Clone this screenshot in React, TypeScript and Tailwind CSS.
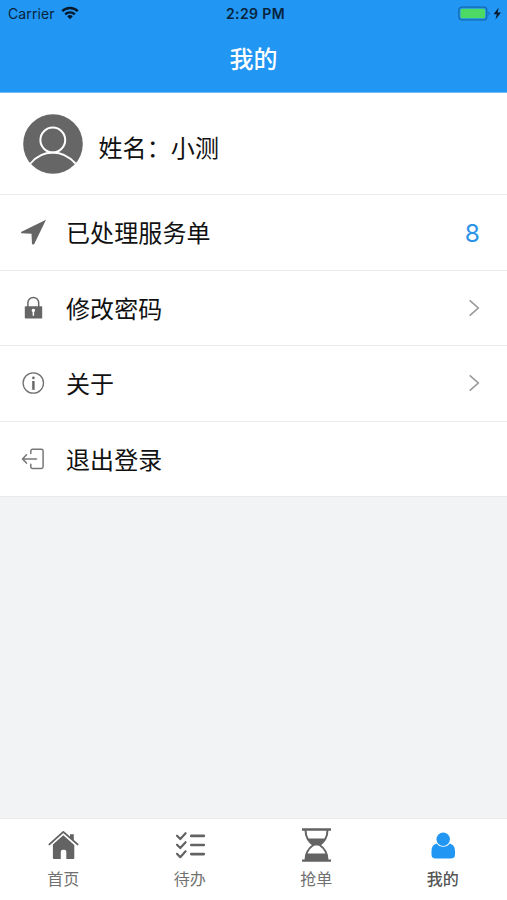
import React from "react";

const AvatarIcon = () => (
  <svg width="60" height="60" viewBox="0 0 60 60" fill="none">
    <circle cx="30" cy="30" r="29.8" fill="#666666" />
    <circle cx="29.8" cy="26" r="12.4" stroke="white" strokeWidth="2" />
    <path d="M7 50C13 42.500 21 38.500 30 38.500S46 42.500 52.500 49.500" stroke="white" strokeWidth="2" />
  </svg>
);

const SendIcon = () => (
  <svg width="26" height="26" viewBox="0 0 26 26" fill="#666666">
    <path d="M1 13 26 .8 14 25.500 12 25.300 11.500 14.800 1.300 14.300Z" />
  </svg>
);

const LockIcon = () => (
  <svg width="26" height="26" viewBox="0 0 26 26" fill="none">
    <path d="M7.900 12V7.800a5.400 5.400 0 0 1 10.800 0V12" stroke="#666666" strokeWidth="1.500" />
    <rect x="4.800" y="11.200" width="17.400" height="12.300" rx=".8" fill="#666666" />
    <path d="M11.700 15.400a1.700 1.700 0 1 1 3 1.100l-.6.600v3.700h-1.500v-3.700a1.700 1.700 0 0 1-.9-1.700Z" fill="white" />
  </svg>
);

const InfoIcon = () => (
  <svg width="26" height="26" viewBox="0 0 26 26" fill="none">
    <circle cx="13.300" cy="13" r="10.200" stroke="#707070" strokeWidth="1.300" />
    <circle cx="13.400" cy="7.900" r="1.300" fill="#666666" />
    <path d="M12.200 11h2.400v8.300h.5v.5h-3.400v-.5h.5Z" fill="#666666" />
  </svg>
);

const LogoutIcon = () => (
  <svg
    width="26"
    height="26"
    viewBox="0 0 26 26"
    fill="none"
    stroke="#777777"
    strokeWidth="1.500"
    strokeLinecap="round"
    strokeLinejoin="round"
  >
    <path d="M10.800 7.500V5a1.700 1.700 0 0 1 1.700-1.700h8.900A1.700 1.700 0 0 1 23.100 5v15.800a1.700 1.700 0 0 1-1.700 1.700h-8.900a1.700 1.700 0 0 1-1.700-1.700v-2.500" />
    <path d="M16.500 13H2.500M6.500 8.800 2.500 13l4 4.100" />
  </svg>
);

const ArrowRight = () => (
  <svg width="12" height="18" viewBox="0 0 12 18" fill="none" className="mr-[27px]">
    <path d="M1.700 1.300 10.300 9 1.700 16.700" stroke="#999999" strokeWidth="1.600" />
  </svg>
);

const HomeIcon = () => (
  <svg width="32" height="36" viewBox="0 0 32 36" fill="#636363">
    <path d="M2.400 17.400 16.300 4.900 30.600 17.400" fill="none" stroke="#636363" strokeWidth="1.900" strokeLinecap="round" strokeLinejoin="round" />
    <path d="M23 7.200h3.800v7.100L23 10.900Z" />
    <path d="M16.300 8.300 27.300 18v13.100a1 1 0 0 1-1 1h-7v-7.300a2 2 0 0 0-2-2h-1.500a2 2 0 0 0-2 2v7.300H6.900a1 1 0 0 1-1-1V17.500Z" />
  </svg>
);

const TodoIcon = () => (
  <svg width="32" height="36" viewBox="0 0 32 36" fill="none" stroke="#636363" strokeLinecap="round" strokeLinejoin="round">
    <path d="m3 8.700 3.300 3.400L11.600 6.200M3 17.700l3.300 3.400 5.300-5.900M3 26.800l3.300 3.400 5.300-5.900" strokeWidth="2.200" />
    <path d="M17.300 8.900h12.500M17.300 18h12.500M17.300 27.100h12.500" strokeWidth="2.700" />
  </svg>
);

const HourglassIcon = () => (
  <svg width="32" height="36" viewBox="0 0 32 36" fill="#636363">
    <path d="M2 1.300h29v2.400H2zM2 32.400h29v2.400H2z" />
    <path
      d="M5.500 3c0 8 3.500 11.500 7.800 15C9 21 5.500 25 5.500 33M27.500 3c0 8-3.500 11.500-7.800 15C24 21 27.500 25 27.500 33"
      fill="none"
      stroke="#636363"
      strokeWidth="2"
    />
    <path d="M7 11.400h19c-1.500 3-4 4.800-6.500 7h-6C11 16.200 8.500 14.400 7 11.400ZM6 26.500h21l1 6.500H5Z" />
  </svg>
);

const MineIcon = () => (
  <svg width="32" height="36" viewBox="0 0 32 36" fill="#2196f3">
    <path d="M9.800 16.500c1.500 2.100 3.600 3.200 6.400 3.200s5-1.100 6.500-3.200c3.500.8 5.300 3.600 5.300 7.500v3.600c0 2.600-1.200 3.800-3.700 3.800H8.200c-2.500 0-3.700-1.200-3.700-3.800V24c0-3.900 1.800-6.700 5.300-7.500Z" />
    <circle cx="16.200" cy="12.200" r="6.700" />
  </svg>
);

const rows = [
  { label: "已处理服务单", icon: <SendIcon />, extra: <span className="mt-[2px] mr-[27px] text-[24.500px] text-[#2c94e8]">8</span> },
  { label: "修改密码", icon: <LockIcon />, extra: <ArrowRight /> },
  { label: "关于", icon: <InfoIcon />, extra: <ArrowRight /> },
  { label: "退出登录", icon: <LogoutIcon />, extra: null },
];

const tabs = [
  { label: "首页", icon: <HomeIcon />, active: false },
  { label: "待办", icon: <TodoIcon />, active: false },
  { label: "抢单", icon: <HourglassIcon />, active: false },
  { label: "我的", icon: <MineIcon />, active: true },
];

const StatusBar = () => (
  <div className="grid h-[27px] grid-cols-3 items-center text-[#08233c]">
    <div className="flex items-center pl-2">
      <span className="text-[14px] leading-none tracking-[0.1px]">Carrier</span>
      <svg width="18" height="14" viewBox="0 0 18 14" fill="none" stroke="#061a2c" strokeWidth="2.400" className="-mt-px ml-[6px]">
        <path d="M1.200 5.200a11 11 0 0 1 15.600 0M4.200 8.400a6.700 6.700 0 0 1 9.600 0" />
        <path d="M6.200 10.300a4 4 0 0 1 5.600 0L9 13.200Z" fill="#061a2c" stroke="none" />
      </svg>
    </div>
    <span className="pt-px pl-[4px] text-center text-[14px] leading-none font-semibold tracking-[0.4px]">2:29 PM</span>
    <div className="flex items-center justify-end pr-[5px]">
      <svg width="44" height="16" viewBox="0 0 44 16">
        <rect x=".8" y="1.200" width="28" height="12.600" rx="3" fill="none" stroke="#1769ad" strokeWidth="1.300" />
        <rect x="2.500" y="2.800" width="24.600" height="9.400" rx="1.500" fill="#4cd964" />
        <path d="M30.500 5.500v4c1.600-.7 1.600-3.300 0-4Z" fill="#1769ad" />
        <path d="M40.700 1.500 35.500 8.200h3.300l-1.300 5.300 5.500-7h-3.400Z" fill="#061a2c" />
      </svg>
    </div>
  </div>
);

const App = () => {
  return (
    <div className="flex h-[900px] w-full flex-col overflow-hidden bg-[#f2f3f5] font-[Inter,'Noto_Sans_CJK_SC',sans-serif]">
      <header className="h-[93px] shrink-0 border-b border-[#74bdf7] bg-[#2196f3]">
        <StatusBar />
        <h1 className="flex h-[64px] items-center justify-center pt-[2px] text-[24px] font-medium text-white">我的</h1>
      </header>

      <main className="flex-1">
        <div className="flex h-[102px] items-center border-b border-[#e9e9eb] bg-white pl-[22.500px]">
          <AvatarIcon />
          <p className="mt-[10px] ml-[16px] text-[24px] leading-none tracking-[0.1px] text-[#111111]">姓名：小测</p>
        </div>
        {rows.map((row) => (
          <div key={row.label} className="flex h-[75.500px] items-center border-b border-[#e9e9eb] bg-white pl-5">
            {row.icon}
            <span className="mt-[4px] ml-5 flex-1 text-[24px] tracking-[0.1px] text-[#111111]">{row.label}</span>
            {row.extra}
          </div>
        ))}
      </main>

      <nav className="grid h-[82px] shrink-0 grid-cols-4 border-t border-[#ececee] bg-white pt-[8px] pr-px">
        {tabs.map((tab) => (
          <div key={tab.label} className="flex flex-col items-center">
            {tab.icon}
            <span className={tab.active ? "mt-[8px] text-[16px] leading-none font-medium text-[#555555]" : "mt-[8px] text-[16px] leading-none text-[#707070]"}>
              {tab.label}
            </span>
          </div>
        ))}
      </nav>
    </div>
  );
};

export default App;
